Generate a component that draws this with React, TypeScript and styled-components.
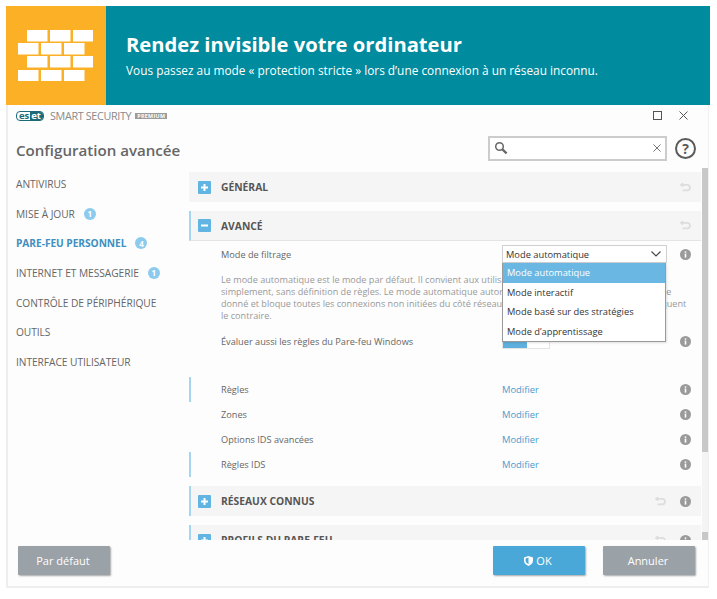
import React from "react";
import styled, { createGlobalStyle } from "styled-components";

const GlobalStyle = createGlobalStyle`
  html, body {
    margin: 0;
    padding: 0;
    background: #ffffff;
    font-family: "Open Sans", "Noto Sans", sans-serif;
  }
  * { box-sizing: border-box; }
`;

const Page = styled.div`
  width: 717px;
  height: 599px;
  padding: 6px 7px 0 6px;
  overflow: hidden;
`;

const Banner = styled.header`
  display: flex;
  height: 99px;
  background: #008b9e;
`;

const BannerIcon = styled.div`
  display: flex;
  align-items: center;
  justify-content: center;
  width: 100px;
  padding-right: 1px;
  background: #fbb026;
`;

const BannerText = styled.div`
  display: flex;
  flex-direction: column;
  justify-content: center;
  padding: 0 0 2px 20px;
  color: #ffffff;
`;

const BannerTitle = styled.h1`
  margin: 0 0 5px;
  font-size: 20.2px;
  line-height: 26px;
  font-weight: 700;
`;

const BannerSub = styled.p`
  margin: 0;
  font-size: 11.85px;
  line-height: 16px;
`;

const Window = styled.div`
  display: flex;
  flex-direction: column;
  width: 703px;
  height: 483px;
  background: #fdfdfd;
  border-left: 2px solid #eeeeee;
  border-right: 1px solid #f0f0f0;
  border-bottom: 2px solid #eeeeee;
`;

const TitleBar = styled.div`
  display: flex;
  align-items: center;
  height: 21px;
  padding: 0 20px 0 8px;
`;

const Logo = styled.span`
  display: inline-flex;
  align-items: center;
  width: 28px;
  height: 10px;
  padding: 0 2px;
  border-radius: 4px;
  border: 1px solid #1d6b78;
  font-size: 9.5px;
  line-height: 8px;
  font-weight: 700;
  color: #1d6b78;
`;

const LogoDark = styled.span`
  margin: 0 -2px 0 auto;
  padding: 0 2px 0 1px;
  height: 8px;
  background: #1d6b78;
  color: #ffffff;
  border-radius: 0 3px 3px 0;
`;

const ProductName = styled.span`
  margin-left: 6px;
  font-size: 10.8px;
  letter-spacing: -0.35px;
  color: #8a8a8a;
`;

const PremiumBadge = styled.span`
  margin-left: 4px;
  padding: 0 2px;
  height: 6px;
  background: #9b9b9b;
  color: #ffffff;
  font-size: 5.4px;
  line-height: 6px;
  font-weight: 700;
  letter-spacing: 0.3px;
`;

const WindowButtons = styled.div`
  display: flex;
  align-items: center;
  gap: 17px;
  margin-left: auto;
`;

const HeadingRow = styled.div`
  display: flex;
  align-items: center;
  height: 42px;
  padding: 2px 12px 0 8px;
`;

const PageTitle = styled.h2`
  margin: 0;
  padding-top: 4px;
  font-size: 15.1px;
  font-weight: 600;
  color: #666666;
`;

const SearchBox = styled.div`
  display: flex;
  align-items: center;
  justify-content: space-between;
  width: 179px;
  height: 25px;
  margin-left: auto;
  padding: 0 4px;
  background: #ffffff;
  border: 2px solid #cccccc;
`;

const HelpIcon = styled.div`
  display: flex;
  align-items: center;
  justify-content: center;
  width: 21px;
  height: 21px;
  margin-left: 8px;
  border: 2px solid #5a5a5a;
  border-radius: 50%;
  font-size: 14px;
  font-weight: 700;
  color: #5a5a5a;
`;

const Body = styled.div`
  display: flex;
  height: 372px;
  overflow: hidden;
`;

const Sidebar = styled.nav`
  flex: none;
  width: 181px;
  padding: 1px 0 0 8px;
`;

const NavItem = styled.div<{ $active?: boolean }>`
  display: flex;
  align-items: center;
  height: 29.7px;
  font-size: 10.2px;
  letter-spacing: -0.05px;
  font-weight: ${(p) => (p.$active ? 700 : 400)};
  color: ${(p) => (p.$active ? "#3f8fc0" : "#666666")};
`;

const NavBadge = styled.span`
  display: flex;
  align-items: center;
  justify-content: center;
  width: 12px;
  height: 12px;
  margin-left: 9px;
  border-radius: 50%;
  background: #8ccbee;
  color: #ffffff;
  font-size: 8px;
  font-weight: 700;
`;

const Main = styled.main`
  flex: none;
  width: 512px;
  padding-top: 4px;
`;

const SectionHeader = styled.div<{ $marked?: boolean }>`
  display: flex;
  align-items: center;
  height: 30px;
  margin-bottom: 9px;
  padding: 0 10px 0 7px;
  background: #f5f5f5;
  border-left: 2px solid ${(p) => (p.$marked ? "#a5d6ee" : "#f5f5f5")};
`;

const ExpandButton = styled.span`
  display: flex;
  flex: none;
  width: 13px;
  height: 13px;
  align-items: center;
  justify-content: center;
  margin-right: 10px;
  border-radius: 1px;
  background: #62b5e2;
`;

const SectionTitle = styled.span`
  font-size: 10.3px;
  font-weight: 700;
  color: #555555;
`;

const HeaderIcons = styled.div`
  display: flex;
  align-items: center;
  gap: 14px;
  margin-left: auto;
`;

const ExpandedHeader = styled(SectionHeader)`
  margin-bottom: 0;
  border-bottom: 1px solid #e4e4e4;
`;

const Row = styled.div<{ $h: number; $marked?: boolean }>`
  display: grid;
  grid-template-columns: 281px 165px 1fr;
  align-items: center;
  height: ${(p) => p.$h}px;
  padding-left: 30px;
  border-left: 2px solid ${(p) => (p.$marked ? "#a5d6ee" : "transparent")};
`;

const RowLabel = styled.span`
  font-size: 9.2px;
  color: #666666;
`;

const RowInfo = styled.span`
  display: flex;
  justify-content: flex-end;
  padding-right: 10px;
`;

const SelectWrap = styled.div`
  position: relative;
  height: 18px;
`;

const SelectBox = styled.div`
  display: flex;
  align-items: center;
  justify-content: space-between;
  height: 18px;
  padding: 0 5px 0 3px;
  background: #ffffff;
  border: 1px solid #cfcfcf;
  font-size: 9.3px;
  color: #333333;
`;

const Dropdown = styled.ul`
  position: absolute;
  top: 18px;
  left: 0;
  z-index: 2;
  width: 164px;
  margin: 0;
  padding: 0;
  list-style: none;
  background: #ffffff;
  border: 1px solid #9a9a9a;
  border-top: none;
  box-shadow: 1px 1px 2px rgba(0, 0, 0, 0.12);
`;

const DropdownItem = styled.li<{ $selected?: boolean }>`
  height: 19.5px;
  padding-left: 4px;
  font-size: 9.3px;
  line-height: 19.5px;
  background: ${(p) => (p.$selected ? "#6ab7e3" : "transparent")};
  color: ${(p) => (p.$selected ? "#ffffff" : "#333333")};
`;

const Description = styled.p`
  margin: 7px 0 10px;
  padding-left: 32px;
  font-size: 9.1px;
  line-height: 12px;
  white-space: nowrap;
  color: #999999;
`;

const Toggle = styled.div`
  display: flex;
  width: 48px;
  height: 16px;
  background: #ffffff;
  border: 1px solid #e4e4e4;
`;

const ToggleOn = styled.span`
  width: 24px;
  background: #5fb0de;
`;

const RuleList = styled.div`
  margin: 27px 0 9px;
`;

const LinkText = styled.a`
  font-size: 9.4px;
  color: #4a9bd0;
`;

const Scrollbar = styled.div`
  display: flex;
  flex-direction: column;
  justify-content: space-between;
  flex: none;
  width: 6px;
  margin-left: 1px;
  background: #f4f4f4;
`;

const ScrollThumb = styled.div<{ $h: number }>`
  height: ${(p) => p.$h}px;
  background: #c8c8c8;
`;

const Footer = styled.footer`
  display: flex;
  align-items: flex-start;
  flex: 1;
  padding: 6px 13px 0 10px;
`;

const FooterButton = styled.button<{ $primary?: boolean }>`
  display: flex;
  align-items: center;
  justify-content: center;
  gap: 3px;
  width: 92px;
  height: 29px;
  padding: 0 2px 0 0;
  border: none;
  border-radius: 1px;
  background: ${(p) => (p.$primary ? "#4aa8d8" : "#9aa1a7")};
  box-shadow: 1px 1px 2px rgba(0, 0, 0, 0.35);
  color: #ffffff;
  font-family: inherit;
  font-size: 11px;
`;

const FooterRight = styled.div`
  display: flex;
  gap: 18px;
  margin-left: auto;
`;

const bricks = [
  [9, 0],
  [32, 0],
  [55, 0],
  [0, 13],
  [23, 13],
  [46, 13],
  [9, 26],
  [32, 26],
  [55, 26],
  [0, 40],
  [23, 40],
  [46, 40],
];

const WallIcon = () => (
  <svg width="75" height="51" viewBox="0 0 75 51">
    {bricks.map(([x, y]) => (
      <rect key={`${x}-${y}`} x={x} y={y} width="20.5" height="11.5" fill="#fff" />
    ))}
  </svg>
);

const InfoIcon = () => (
  <svg width="11" height="11" viewBox="0 0 11 11">
    <circle cx="5.5" cy="5.5" r="5.5" fill="#9a9a9a" />
    <rect x="4.7" y="4.6" width="1.6" height="4" fill="#fff" />
    <rect x="4.7" y="2.4" width="1.6" height="1.4" fill="#fff" />
  </svg>
);

const ResetIcon = () => (
  <svg width="11" height="9" viewBox="0 0 11 9" fill="none" stroke="#dddddd" strokeWidth="1.8">
    <path d="M1 1.8h6.2a2.8 2.8 0 0 1 0 5.6H2.5" />
    <path d="M3.2 0.2 1 1.8l2.2 1.6" />
  </svg>
);

const PlusIcon = () => (
  <svg width="9" height="9" viewBox="0 0 9 9">
    <path d="M3.5 1h2v2.5H8v2H5.5V8h-2V5.5H1v-2h2.5z" fill="#fff" />
  </svg>
);

const MinusIcon = () => (
  <svg width="9" height="9" viewBox="0 0 9 9">
    <rect x="1" y="3.5" width="7" height="2" fill="#fff" />
  </svg>
);

const SearchIcon = () => (
  <svg width="14" height="14" viewBox="0 0 14 14" fill="none" stroke="#666" strokeWidth="1.5">
    <circle cx="5.5" cy="5.5" r="3.8" />
    <path d="M8.4 8.4 12.6 12.4" strokeWidth="2.2" />
  </svg>
);

const CloseIcon = ({ size = 9, color = "#555" }: { size?: number; color?: string }) => (
  <svg width={size} height={size} viewBox="0 0 9 9" fill="none" stroke={color} strokeWidth="1">
    <path d="M.5.5l8 8M8.5.5l-8 8" />
  </svg>
);

const MaximizeIcon = () => (
  <svg width="9" height="9" viewBox="0 0 9 9" fill="none" stroke="#555" strokeWidth="1">
    <rect x=".5" y=".5" width="8" height="8" />
  </svg>
);

const ChevronIcon = () => (
  <svg width="10" height="6" viewBox="0 0 10 6" fill="none" stroke="#444" strokeWidth="1.1">
    <path d="M.5.5 5 5 9.5.5" />
  </svg>
);

const ShieldIcon = () => (
  <svg width="9" height="10" viewBox="0 0 9 10">
    <path d="M4.5 0 9 1.4v3.2C9 7.4 6.8 9.2 4.5 10 2.2 9.2 0 7.4 0 4.6V1.4z" fill="#fff" />
    <path d="M4.5 1.6v6.6C3 7.5 1.6 6.3 1.6 4.6V2.6z" fill="#4aa8d8" />
  </svg>
);

const navItems: { label: string; badge?: number; active?: boolean }[] = [
  { label: "ANTIVIRUS" },
  { label: "MISE À JOUR", badge: 1 },
  { label: "PARE-FEU PERSONNEL", badge: 4, active: true },
  { label: "INTERNET ET MESSAGERIE", badge: 1 },
  { label: "CONTRÔLE DE PÉRIPHÉRIQUE" },
  { label: "OUTILS" },
  { label: "INTERFACE UTILISATEUR" },
];

const rules = [
  { label: "Règles", marked: true },
  { label: "Zones" },
  { label: "Options IDS avancées" },
  { label: "Règles IDS", marked: true },
];

const modes = [
  "Mode automatique",
  "Mode interactif",
  "Mode basé sur des stratégies",
  "Mode d’apprentissage",
];

export default function App() {
  return (
    <Page>
      <GlobalStyle />
      <Banner>
        <BannerIcon>
          <WallIcon />
        </BannerIcon>
        <BannerText>
          <BannerTitle>Rendez invisible votre ordinateur</BannerTitle>
          <BannerSub>
            Vous passez au mode « protection stricte » lors d’une connexion à un réseau inconnu.
          </BannerSub>
        </BannerText>
      </Banner>
      <Window>
        <TitleBar>
          <Logo>
            es
            <LogoDark>et</LogoDark>
          </Logo>
          <ProductName>SMART SECURITY</ProductName>
          <PremiumBadge>PREMIUM</PremiumBadge>
          <WindowButtons>
            <MaximizeIcon />
            <CloseIcon />
          </WindowButtons>
        </TitleBar>
        <HeadingRow>
          <PageTitle>Configuration avancée</PageTitle>
          <SearchBox>
            <SearchIcon />
            <CloseIcon size={8} color="#666" />
          </SearchBox>
          <HelpIcon>?</HelpIcon>
        </HeadingRow>
        <Body>
          <Sidebar>
            {navItems.map((item) => (
              <NavItem key={item.label} $active={item.active}>
                {item.label}
                {item.badge && <NavBadge>{item.badge}</NavBadge>}
              </NavItem>
            ))}
          </Sidebar>
          <Main>
            <SectionHeader>
              <ExpandButton>
                <PlusIcon />
              </ExpandButton>
              <SectionTitle>GÉNÉRAL</SectionTitle>
              <HeaderIcons>
                <ResetIcon />
              </HeaderIcons>
            </SectionHeader>
            <ExpandedHeader $marked>
              <ExpandButton>
                <MinusIcon />
              </ExpandButton>
              <SectionTitle>AVANCÉ</SectionTitle>
              <HeaderIcons>
                <ResetIcon />
              </HeaderIcons>
            </ExpandedHeader>
            <Row $h={26}>
              <RowLabel>Mode de filtrage</RowLabel>
              <SelectWrap>
                <SelectBox>
                  Mode automatique
                  <ChevronIcon />
                </SelectBox>
                <Dropdown>
                  {modes.map((mode, i) => (
                    <DropdownItem key={mode} $selected={i === 0}>
                      {mode}
                    </DropdownItem>
                  ))}
                </Dropdown>
              </SelectWrap>
              <RowInfo>
                <InfoIcon />
              </RowInfo>
            </Row>
            <Description>
              Le mode automatique est le mode par défaut. Il convient aux utilisateurs qui préfèrent
              utiliser le pare-feu
              <br />
              simplement, sans définition de règles. Le mode automatique autorise tout le trafic
              sortant pour le système
              <br />
              donné et bloque toutes les connexions non initiées du côté réseau, sauf si des règles
              personnelles n’indiquent
              <br />
              le contraire.
            </Description>
            <Row $h={18}>
              <RowLabel>Évaluer aussi les règles du Pare-feu Windows</RowLabel>
              <Toggle>
                <ToggleOn />
              </Toggle>
              <RowInfo>
                <InfoIcon />
              </RowInfo>
            </Row>
            <RuleList>
              {rules.map((rule) => (
                <Row key={rule.label} $h={25} $marked={rule.marked}>
                  <RowLabel>{rule.label}</RowLabel>
                  <LinkText>Modifier</LinkText>
                  <RowInfo>
                    <InfoIcon />
                  </RowInfo>
                </Row>
              ))}
            </RuleList>
            {["RÉSEAUX CONNUS", "PROFILS DU PARE-FEU"].map((title) => (
              <SectionHeader key={title} $marked>
                <ExpandButton>
                  <PlusIcon />
                </ExpandButton>
                <SectionTitle>{title}</SectionTitle>
                <HeaderIcons>
                  <ResetIcon />
                  <InfoIcon />
                </HeaderIcons>
              </SectionHeader>
            ))}
          </Main>
          <Scrollbar>
            <ScrollThumb $h={284} />
            <ScrollThumb $h={8} />
          </Scrollbar>
        </Body>
        <Footer>
          <FooterButton>Par défaut</FooterButton>
          <FooterRight>
            <FooterButton $primary>
              <ShieldIcon />
              OK
            </FooterButton>
            <FooterButton>Annuler</FooterButton>
          </FooterRight>
        </Footer>
      </Window>
    </Page>
  );
}
